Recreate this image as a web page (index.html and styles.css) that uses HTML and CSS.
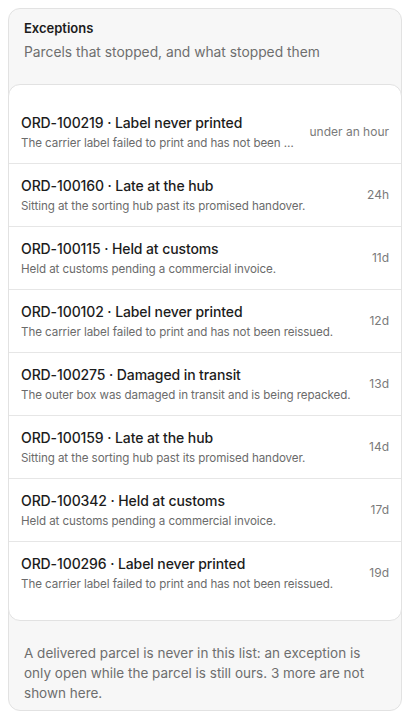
FILE: index.html
```html
<!DOCTYPE html>
<html>
<head>
<meta charset="utf-8">
<link rel="stylesheet" href="styles.css">
</head>
<body>
<section class="card">
  <header class="head">
    <h1 class="title">Exceptions</h1>
    <p class="sub">Parcels that stopped, and what stopped them</p>
  </header>
  <ul class="list">
    <li class="row"><div class="txt"><div class="rt">ORD-100219 · Label never printed</div><div class="rd">The carrier label failed to print and has not been reissued.</div></div><span class="age">under an hour</span></li>
    <li class="row"><div class="txt"><div class="rt">ORD-100160 · Late at the hub</div><div class="rd">Sitting at the sorting hub past its promised handover.</div></div><span class="age">24h</span></li>
    <li class="row"><div class="txt"><div class="rt">ORD-100115 · Held at customs</div><div class="rd">Held at customs pending a commercial invoice.</div></div><span class="age">11d</span></li>
    <li class="row"><div class="txt"><div class="rt">ORD-100102 · Label never printed</div><div class="rd">The carrier label failed to print and has not been reissued.</div></div><span class="age">12d</span></li>
    <li class="row"><div class="txt"><div class="rt">ORD-100275 · Damaged in transit</div><div class="rd">The outer box was damaged in transit and is being repacked.</div></div><span class="age">13d</span></li>
    <li class="row"><div class="txt"><div class="rt">ORD-100159 · Late at the hub</div><div class="rd">Sitting at the sorting hub past its promised handover.</div></div><span class="age">14d</span></li>
    <li class="row"><div class="txt"><div class="rt">ORD-100342 · Held at customs</div><div class="rd">Held at customs pending a commercial invoice.</div></div><span class="age">17d</span></li>
    <li class="row"><div class="txt"><div class="rt">ORD-100296 · Label never printed</div><div class="rd">The carrier label failed to print and has not been reissued.</div></div><span class="age">19d</span></li>
  </ul>
  <p class="foot">A delivered parcel is never in this list: an exception is only open while the parcel is still ours. 3 more are not shown here.</p>
</section>
</body>
</html>
```
FILE: styles.css
```css
* { box-sizing: border-box; }
html, body { margin: 0; padding: 0; background: #ffffff; }
body {
  padding: 8px;
  font-family: Inter, "Noto Sans", sans-serif;
  color: #1c1c1c;
}
.card {
  width: 394px;
  height: 703px;
  background: #f7f7f7;
  border: 1px solid #e2e2e2;
  border-radius: 12px;
  display: flex;
  flex-direction: column;
}
.head { padding: 10px 15px 22px; }
.title {
  margin: 0;
  font-size: 13px;
  line-height: 18px;
  font-weight: 600;
  color: #1c1c1c;
}
.sub {
  margin: 5px 0 0;
  font-size: 13.8px;
  line-height: 20px;
  color: #6e6e6e;
}
.list {
  list-style: none;
  margin: 0 -1px;
  padding: 15px 0 16px;
  background: #ffffff;
  border: 1px solid #e2e2e2;
  border-radius: 12px;
}
.row {
  display: flex;
  align-items: center;
  gap: 12px;
  padding: 12px 12px;
  height: 63px;
  border-top: 1px solid #e6e6e6;
}
.row:first-child { border-top: 0; }
.txt { flex: 1; min-width: 0; display: flex; flex-direction: column; gap: 2px; }
.rt {
  font-size: 14px;
  line-height: 20px;
  font-weight: 500;
  color: #1c1c1c;
  white-space: nowrap;
  letter-spacing: -0.1px;
}
.rd {
  font-size: 11.6px;
  line-height: 16px;
  color: #6b6b6b;
  white-space: nowrap;
  overflow: hidden;
  text-overflow: ellipsis;
  letter-spacing: -0.08px;
}
.age {
  flex: none;
  font-size: 12px;
  line-height: 16px;
  color: #7a7a7a;
}
.foot {
  margin: 0;
  padding: 22px 15px 8px;
  font-size: 13.5px;
  line-height: 20px;
  color: #6e6e6e;
}
```
